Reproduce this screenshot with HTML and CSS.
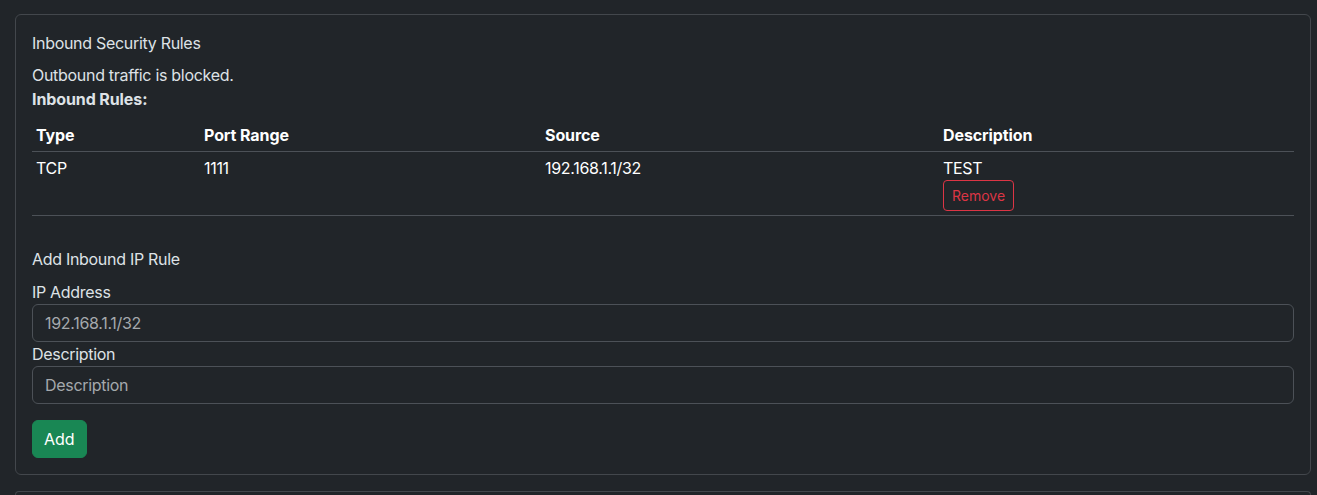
FILE: index.html
```html
<!DOCTYPE html>
<html lang="en">
<head>
<meta charset="utf-8">
<title>Inbound Security Rules</title>
<link rel="stylesheet" href="styles.css">
</head>
<body>
<div class="page">
  <section class="card">
    <div class="card-body">
      <h6 class="card-title">Inbound Security Rules</h6>
      <p class="status">Outbound traffic is blocked.</p>
      <p class="label-strong"><strong>Inbound Rules:</strong></p>
      <table class="rules">
        <thead>
          <tr>
            <th class="col-type">Type</th>
            <th class="col-port">Port Range</th>
            <th class="col-source">Source</th>
            <th class="col-desc">Description</th>
          </tr>
        </thead>
        <tbody>
          <tr>
            <td>TCP</td>
            <td>1111</td>
            <td>192.168.1.1/32</td>
            <td>
              <div>TEST</div>
              <button class="btn btn-sm btn-outline-danger" type="button">Remove</button>
            </td>
          </tr>
        </tbody>
      </table>
      <form class="add-form">
        <h6 class="card-title">Add Inbound IP Rule</h6>
        <label class="form-label" for="ip">IP Address</label>
        <input class="form-control" id="ip" type="text" placeholder="192.168.1.1/32">
        <label class="form-label" for="desc">Description</label>
        <input class="form-control" id="desc" type="text" placeholder="Description">
        <button class="btn btn-success" type="button">Add</button>
      </form>
    </div>
  </section>
  <section class="card next-card"></section>
</div>
</body>
</html>
```

FILE: styles.css
```css
* { box-sizing: border-box; }
html, body {
  margin: 0;
  background: #212529;
}
body {
  font-family: Inter, "Liberation Sans", Arial, sans-serif;
  font-size: 16px;
  line-height: 1.5;
  color: #dee2e6;
  letter-spacing: -0.3px;
}
.page {
  padding: 14px 6px 0 15px;
  display: flex;
  flex-direction: column;
  gap: 16px;
}
.card {
  border: 1px solid #43474c;
  border-radius: 6px;
  background: #212529;
}
.next-card { height: 4px; border-bottom: 0; border-bottom-left-radius: 0; border-bottom-right-radius: 0; }
.card-body {
  padding: 17px 16px 16px;
}
.card-title {
  margin: 0 0 9px;
  font-size: 16px;
  font-weight: 400;
  line-height: 22px;
  color: #dee2e6;
}
.status { margin: 0; }
.label-strong { margin: 0 0 8px; }
.label-strong strong { font-weight: 700; letter-spacing: -0.1px; }
.rules {
  width: 100%;
  border-collapse: collapse;
  color: #fff;
  margin-bottom: 16px;
}
.rules th, .rules td {
  padding: 4px;
  text-align: left;
  vertical-align: top;
  border-bottom: 1px solid #4c5157;
}
.rules th { font-weight: 700; letter-spacing: -0.1px; }
.col-type { width: 168px; }
.col-port { width: 341px; }
.col-source { width: 398px; }
.col-desc { width: 355px; }
.add-form {
  margin-top: 32px;
  display: flex;
  flex-direction: column;
  align-items: flex-start;
}
.add-form .card-title { margin-bottom: 10px; }
.form-label {
  color: #dee2e6;
  line-height: 24px;
}
.form-control {
  width: 100%;
  height: 38px;
  padding: 6px 12px;
  font: inherit;
  letter-spacing: -0.3px;
  color: #dee2e6;
  background: #212529;
  border: 1px solid #4c5157;
  border-radius: 6px;
  outline: none;
}
.form-control::placeholder { color: #a5a9ad; opacity: 1; }
.btn {
  font-family: inherit;
  border-radius: 6px;
  cursor: pointer;
}
.btn-sm {
  padding: 4px 8px;
  font-size: 14px;
  line-height: 21px;
  border-radius: 4px;
}
.btn-outline-danger {
  color: #dc3545;
  background: transparent;
  border: 1px solid #dc3545;
}
.btn-success {
  margin-top: 16px;
  padding: 6px 11px;
  font-size: 16px;
  line-height: 24px;
  color: #fff;
  background: #198754;
  border: 1px solid #198754;
}
```
